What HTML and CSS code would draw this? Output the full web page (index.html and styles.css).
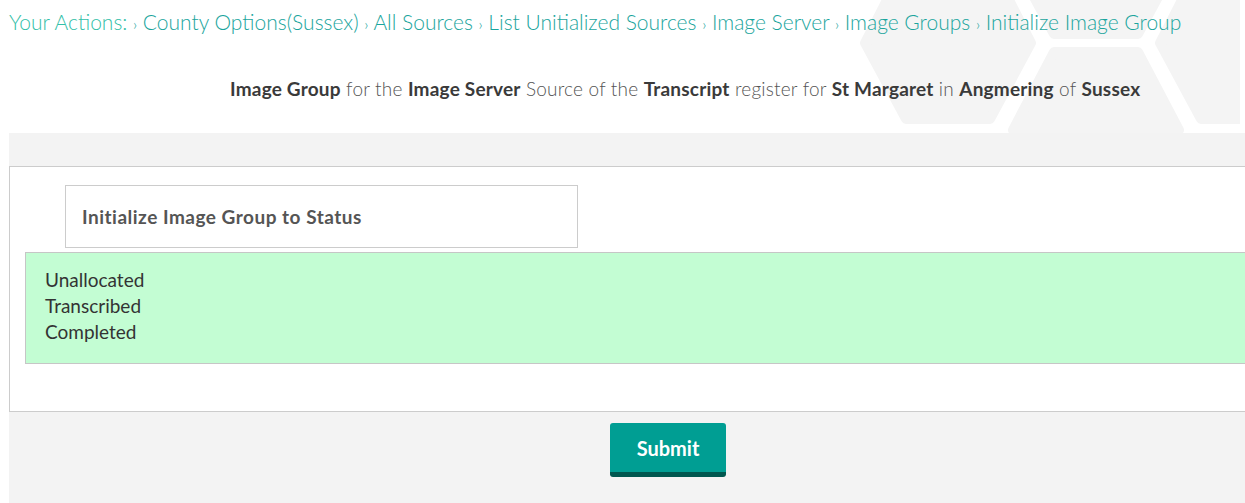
FILE: index.html
```html
<!DOCTYPE html>
<html>
<head>
<meta charset="utf-8">
<link rel="stylesheet" href="styles.css">
</head>
<body>
<div class="page">
  <header class="header">
    <svg class="hexes" width="420" height="133" viewBox="0 0 420 133" aria-hidden="true">
      <g fill="#f4f4f4" stroke="#f4f4f4" stroke-width="10" stroke-linejoin="round">
        <polygon points="0,43 41,-37 125,-37 166,43 125,119 41,119" transform="translate(45,0)"/>
        <polygon points="0,-42 41,-122 125,-122 166,-42 125,34 41,34" transform="translate(193,0)"/>
        <polygon points="0,130 41,52 125,52 166,130 125,210 41,210" transform="translate(193,0)"/>
        <polygon points="0,43 41,-37 125,-37 166,43 125,119 41,119" transform="translate(340,0)"/>
      </g>
    </svg>
    <nav class="crumbs">
      <span class="crumbs-label">Your Actions:</span>
      <span class="sep">›</span> <a>County Options(Sussex)</a>
      <span class="sep">›</span> <a>All Sources</a>
      <span class="sep">›</span> <a>List Unitialized Sources</a>
      <span class="sep">›</span> <a>Image Server</a>
      <span class="sep">›</span> <a>Image Groups</a>
      <span class="sep">›</span> <a>Initialize Image Group</a>
    </nav>
    <p class="subtitle"><b>Image Group</b> for the <b>Image Server</b> Source of the <b>Transcript</b> register for <b>St Margaret</b> in <b>Angmering</b> of <b>Sussex</b></p>
  </header>
  <main class="band">
    <section class="panel">
      <div class="legend">Initialize Image Group to Status</div>
      <div class="options">
        <div>Unallocated</div>
        <div>Transcribed</div>
        <div>Completed</div>
      </div>
    </section>
    <div class="actions">
      <button class="submit">Submit</button>
    </div>
  </main>
</div>
</body>
</html>
```

FILE: styles.css
```css
html, body {
  margin: 0;
  padding: 0;
  background: #fff;
  overflow: hidden;
}
body {
  font-family: Lato, "Open Sans", sans-serif;
  color: #555;
}
.page {
  width: 1400px;
  padding-left: 9px;
}
.header {
  position: relative;
  height: 133px;
}
.hexes {
  position: absolute;
  left: 811px;
  top: 0;
}
.crumbs {
  position: relative;
  padding-top: 10px;
  font-size: 21px;
  line-height: 24px;
  font-weight: 300;
  color: #1aa59d;
  white-space: nowrap;
}
.crumbs-label {
  color: #33c0a8;
}
.crumbs a {
  color: #1aa59d;
  text-decoration: none;
}
.sep {
  font-size: 15px;
}
.subtitle {
  position: relative;
  margin: 0;
  padding-top: 41px;
  padding-left: 221px;
  font-size: 19px;
  letter-spacing: 0.2px;
  line-height: 24px;
  font-weight: 300;
  color: #555;
  white-space: nowrap;
}
.subtitle b {
  font-weight: 700;
  color: #3a3a3a;
}
.band {
  background: #f3f3f3;
  padding-top: 33px;
  height: 337px;
}
.panel {
  background: #fff;
  border: 1px solid #cccccc;
  border-right: none;
  padding: 18px 0 47px 15px;
}
.legend {
  margin-left: 40px;
  width: 495px;
  height: 61px;
  border: 1px solid #cccccc;
  padding-left: 16px;
  display: flex;
  align-items: center;
  font-size: 19px;
  letter-spacing: 0.5px;
  font-weight: 700;
  color: #555;
}
.options {
  margin-top: 4px;
  background: #c3fdd3;
  border: 1px solid #c6c6c6;
  border-right: none;
  padding: 14px 19px 18px;
  font-size: 19px;
  line-height: 26px;
  font-weight: 400;
  color: #333;
}
.actions {
  padding-top: 11px;
  padding-left: 601px;
}
.submit {
  width: 116px;
  height: 54px;
  background: #009e93;
  border: none;
  border-bottom: 5px solid #00574f;
  border-radius: 3px;
  color: #fff;
  font-family: inherit;
  font-size: 20px;
  font-weight: 700;
  padding: 0;
}
```
